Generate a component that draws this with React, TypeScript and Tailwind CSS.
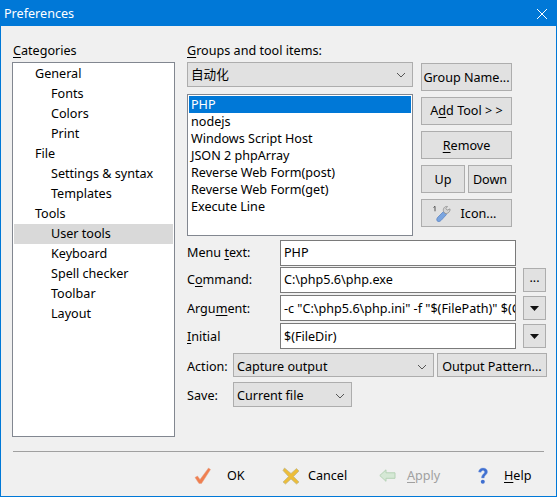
import React from "react";

const font = { fontFamily: '"Noto Sans","Noto Sans CJK SC",sans-serif' };

function Btn({ className = "", children }: { className?: string; children: React.ReactNode }) {
  return (
    <div className={"flex items-center justify-center border border-[#adadad] bg-[#e1e1e1] text-[#000] " + className}>
      {children}
    </div>
  );
}

function Chevron() {
  return (
    <svg width="10" height="6" viewBox="0 0 10 6" className="shrink-0">
      <path d="M1 1l4 4 4-4" fill="none" stroke="#555" strokeWidth="1" />
    </svg>
  );
}

function Combo({ className = "", children }: { className?: string; children: React.ReactNode }) {
  return (
    <div className={"flex items-center justify-between border border-[#adadad] bg-[#e1e1e1] pl-[3px] pr-[6px] " + className}>
      <span>{children}</span>
      <Chevron />
    </div>
  );
}

function Input({ children, className = "" }: { children: string; className?: string }) {
  return (
    <div className={"flex items-center overflow-hidden whitespace-nowrap border border-[#7a7a7a] bg-white pl-[3px] w-[236px] " + className}>
      {children}
    </div>
  );
}

function U({ children }: { children: string }) {
  return <span className="underline underline-offset-2">{children}</span>;
}

function Tri() {
  return (
    <svg width="9" height="5" viewBox="0 0 9 5">
      <path d="M0 0h9L4.500 5z" fill="#111" />
    </svg>
  );
}

const cats: [string, boolean, boolean?][] = [
  ["General", false],
  ["Fonts", true],
  ["Colors", true],
  ["Print", true],
  ["File", false],
  ["Settings & syntax", true],
  ["Templates", true],
  ["Tools", false],
  ["User tools", true, true],
  ["Keyboard", true],
  ["Spell checker", true],
  ["Toolbar", true],
  ["Layout", true],
];

const tools = ["nodejs", "Windows Script Host", "JSON 2 phpArray", "Reverse Web Form(post)", "Reverse Web Form(get)", "Execute Line"];

function Wrench() {
  return (
    <svg width="20" height="18" viewBox="0 0 20 18">
      <path d="M0.500 2.500l1.500-1.200v5" fill="none" stroke="#444" strokeWidth="0.9" />
      <path d="M5 12L10.500 6.500l3 3-5.500 6c-1.200 1.200-3 1.400-3.800.4-.8-1-.4-2.700.8-3.900z" fill="#7aa5e0" stroke="#5f86c4" strokeWidth="0.8" />
      <path d="M10.500 6.500c-.8-2.800 1-5.500 4-5l-1.600 2 1.300 1.700 2.800-1.300c.4 2.800-2 4.900-4.900 4.700z" fill="#d4d4d4" stroke="#8d8d8d" strokeWidth="0.8" />
    </svg>
  );
}

function Check() {
  return (
    <svg width="18" height="18" viewBox="0 0 18 18">
      <path d="M1 10.500l2.500-1.500 2.500 3.500L14.500 1l2 1.500L7.500 16.500H5z" fill="#f07f50" stroke="#e2a184" strokeWidth="0.5" />
    </svg>
  );
}

function Cross() {
  return (
    <svg width="18" height="18" viewBox="0 0 18 18">
      <path d="M2.500 1L9 6.500 14.500 1.500 17 4 11.500 9.500 17 15l-2.500 2L9 12 3.500 17 1 15l5.500-5.500L1 3.500z" fill="#ecbd3a" stroke="#bdb48a" strokeWidth="0.7" />
    </svg>
  );
}

function Back() {
  return (
    <svg width="17" height="13" viewBox="0 0 17 13">
      <path d="M.8 6.500L7 .8v3h9v5.500H7v3z" fill="#d5e8d5" stroke="#b5d2b5" strokeWidth="1" />
    </svg>
  );
}

function Q() {
  return (
    <svg width="12" height="18" viewBox="0 0 12 18">
      <path d="M1.500 5C1.800 2.500 3.800 1 6 1c2.600 0 4.500 1.500 4.500 3.800 0 3-3.300 3.200-3.300 6.200H4.500c0-3.800 3-4 3-6 0-1-.7-1.500-1.600-1.500-1 0-1.600.7-1.800 1.800z" fill="#3f6fd0" stroke="#7f9fe0" strokeWidth="0.4" />
      <circle cx="5.800" cy="14.800" r="2" fill="#3f6fd0" />
    </svg>
  );
}

export default function App() {
  return (
    <div
      style={font}
      className="flex h-[497px] w-[557px] flex-col overflow-hidden border border-t-0 border-[#0078d7] bg-[#f0f0f0] text-[12.6px] leading-[18px] text-black"
    >
      <div className="flex h-[26px] shrink-0 items-center justify-between bg-[#0078d7] pl-[3px] pr-[8px] pt-[1px] text-white">
        <span>Preferences</span>
        <svg width="12" height="12" viewBox="0 0 12 12">
          <path d="M1 1l10 10M11 1L1 11" stroke="#fff" strokeWidth="1" fill="none" />
        </svg>
      </div>

      <div className="flex flex-1 pl-[11px] pt-[15px]">
        <div className="flex w-[163px] flex-col">
          <div className="h-[21px] pl-px pt-[1px]">
            <U>C</U>ategories
          </div>
          <div className="h-[375px] border border-[#828790] bg-white p-px">
            {cats.map(([t, sub, sel]) => (
              <div
                key={t}
                className={"flex h-[20px] items-center " + (sub ? "pl-[37px] " : "pl-[21px] ") + (sel ? "bg-[#d9d9d9]" : "")}
              >
                {t}
              </div>
            ))}
          </div>
        </div>

        <div className="ml-[12px] flex w-[361px] flex-col">
          <div className="h-[21px] pt-[1px]">
            <U>G</U>roups and tool items:
          </div>
          <div className="flex">
            <div className="flex w-[226px] flex-col">
              <Combo className="h-[25px]">自动化</Combo>
              <div className="mt-[7px] h-[142px] border border-[#828790] bg-white p-px">
                <div className="flex h-[17px] items-center bg-[#0078d7] pl-[2px] text-white">PHP</div>
                {tools.map((t) => (
                  <div key={t} className="flex h-[17px] items-center whitespace-nowrap pl-[2px]">
                    {t}
                  </div>
                ))}
              </div>
            </div>
            <div className="ml-[8px] mt-px flex w-[91px] flex-col gap-[6px]">
              <Btn className="h-[28px] pt-[2px]">Group Name...</Btn>
              <Btn className="h-[28px]">
                <span>
                  A<U>d</U>d Tool &gt; &gt;
                </span>
              </Btn>
              <Btn className="h-[28px] pt-[2px]">
                <span>
                  <U>R</U>emove
                </span>
              </Btn>
              <div className="flex gap-[3px]">
                <Btn className="h-[28px] w-[44px] pt-[2px]">Up</Btn>
                <Btn className="h-[28px] w-[44px] pt-[2px]">Down</Btn>
              </div>
              <Btn className="h-[28px] gap-[8px] pr-[4px] pt-[2px]">
                <Wrench />
                Icon...
              </Btn>
            </div>
          </div>

          <div className="mt-[4px] flex flex-col">
            <div className="flex h-[27px] items-start">
              <span className="flex h-[26px] w-[93px] items-center pb-[1px]">
                <span>
                  Menu <U>t</U>ext:
                </span>
              </span>
              <Input className="h-[26px] pb-[1px]">PHP</Input>
            </div>
            <div className="flex h-[28px] items-start">
              <span className="flex h-[26px] w-[93px] items-center pb-[1px]">
                <span>
                  C<U>o</U>mmand:
                </span>
              </span>
              <Input className="h-[26px] pb-[1px]">C:\php5.6\php.exe</Input>
              <Btn className="ml-[7px] mt-px h-[24px] w-[23px] pb-[4px]">...</Btn>
            </div>
            <div className="flex h-[28px] items-start">
              <span className="flex h-[26px] w-[93px] items-center pt-[2px]">
                <span>
                  Argu<U>m</U>ent:
                </span>
              </span>
              <Input className="h-[26px] pt-[2px]">{'-c "C:\\php5.6\\php.ini" -f "$(FilePath)" $(CurText)'}</Input>
              <Btn className="ml-[7px] mt-px h-[24px] w-[23px]">
                <Tri />
              </Btn>
            </div>
            <div className="flex h-[26px] items-start">
              <span className="flex h-[26px] w-[93px] items-center pt-[2px]">
                <span>
                  <U>I</U>nitial
                </span>
              </span>
              <Input className="h-[26px] pt-[2px]">$(FileDir)</Input>
              <Btn className="ml-[7px] mt-px h-[24px] w-[23px]">
                <Tri />
              </Btn>
            </div>
          </div>

          <div className="mt-[4px] flex h-[24px] items-center">
            <span className="w-[46px] pt-[3px]">Action:</span>
            <Combo className="h-[24px] w-[201px] pt-[3px]">Capture output</Combo>
            <Btn className="ml-[3px] h-[24px] w-[110px] pt-[3px]">Output Pattern...</Btn>
          </div>
          <div className="mt-[5px] flex h-[25px] items-center">
            <span className="w-[46px] pt-[3px]">Save:</span>
            <Combo className="h-[25px] w-[119px] pt-[3px]">Current file</Combo>
          </div>
        </div>
      </div>

      <div className="ml-[12px] mr-[12px] h-[1px] bg-[#a0a0a0]" />
      <div className="flex h-[44px] shrink-0 items-center pl-[193px] pt-[3px]">
        <div className="flex w-[88px] items-center gap-[15px]">
          <Check />
          OK
        </div>
        <div className="flex w-[97px] items-center gap-[8px]">
          <Cross />
          Cancel
        </div>
        <div className="flex w-[98px] items-center gap-[11px] text-[#a0a0a0]">
          <Back />
          <span>
            <U>A</U>pply
          </span>
        </div>
        <div className="flex items-center gap-[15px]">
          <Q />
          <span>
            <U>H</U>elp
          </span>
        </div>
      </div>
    </div>
  );
}
